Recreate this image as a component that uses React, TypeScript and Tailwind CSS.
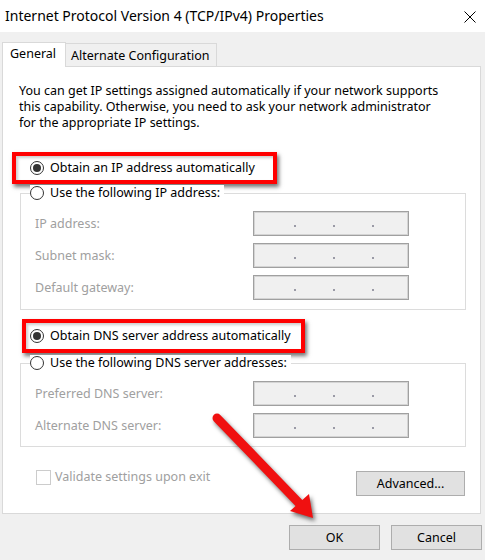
import { ReactNode } from "react";

const font = { fontFamily: '"Noto Sans", "Open Sans", sans-serif' };

function Radio({ checked = false }: { checked?: boolean }) {
  return (
    <span className="w-[14px] h-[14px] rounded-full border border-[#333] bg-white flex items-center justify-center shrink-0">
      {checked && <span className="w-[8px] h-[8px] rounded-full bg-[#333]" />}
    </span>
  );
}

function RedBox({ children, className = "" }: { children: ReactNode; className?: string }) {
  return (
    <div
      className={`border-4 border-[#ff0000] flex items-center gap-[6px] shadow-[2px_3px_4px_rgba(0,0,0,0.55),inset_2px_2px_3px_rgba(0,0,0,0.2)] ${className}`}
    >
      {children}
    </div>
  );
}

function IpBox() {
  return (
    <div className="w-[156px] h-[25px] bg-[#f0f0f0] border border-[#a0a0a0] shadow-[inset_0_0_0_1px_#d4d4d4] flex items-end pb-[8px] pl-[40px] gap-[37px]">
      <span className="w-[2px] h-[2px] bg-[#9a9aa6]" />
      <span className="w-[2px] h-[2px] bg-[#9a9aa6]" />
      <span className="w-[2px] h-[2px] bg-[#9a9aa6]" />
    </div>
  );
}

function Row({ label }: { label: string }) {
  return (
    <div className="flex items-center ml-[5px] h-[25px]">
      <span className="w-[218px] text-[#a0a0a0]">{label}</span>
      <IpBox />
    </div>
  );
}

function Group({
  legend,
  rows,
  className = "",
}: {
  legend: string;
  rows: string[];
  className?: string;
}) {
  return (
    <fieldset
      className={`ml-[17px] w-[446px] border border-[#dcdcdc] pl-[9px] ${className}`}
    >
      <legend className="flex items-center gap-[6px] h-[16px] bg-white pr-[4px]">
        <Radio />
        <span>{legend}</span>
      </legend>
      <div className="flex flex-col gap-[7px] pt-[10px]">
        {rows.map((r) => (
          <Row key={r} label={r} />
        ))}
      </div>
    </fieldset>
  );
}

function Button({ children, className = "" }: { children: ReactNode; className?: string }) {
  return (
    <div
      className={`h-[25px] bg-[#e1e1e1] border border-[#adadad] flex items-center justify-center text-[12.5px] ${className}`}
    >
      {children}
    </div>
  );
}

export default function App() {
  return (
    <div
      className="relative w-[485px] h-[560px] bg-[#f0f0f0] overflow-hidden text-black text-[12.5px] leading-[16px]"
      style={font}
    >
      <div className="h-[32px] bg-white flex items-center justify-between pl-[5px] pr-[9px]">
        <span className="text-[14px]">Internet Protocol Version 4 (TCP/IPv4) Properties</span>
        <svg width="12" height="12" viewBox="0 0 12 12" className="mt-[1px]">
          <path d="M0.5 0.5L11.5 11.5M11.5 0.5L0.5 11.5" stroke="#000" strokeWidth="1" />
        </svg>
      </div>

      <div className="mt-[10px] px-[2px] flex items-end">
        <div className="relative z-10 h-[25px] w-[64px] bg-white border border-b-0 border-[#d9d9d9] pl-[7px] pt-[3px]">
          General
        </div>
        <div className="h-[23px] w-[151px] mb-px bg-[#f0f0f0] border border-l-0 border-b-0 border-[#d9d9d9] pl-[5px] pt-[4px]">
          Alternate Configuration
        </div>
      </div>

      <div className="-mt-px ml-[2px] w-[479px] h-[448px] bg-white border border-[#d9d9d9] flex flex-col">
        <p className="mt-[16px] ml-[16px]">
          You can get IP settings assigned automatically if your network supports
          <br />
          this capability. Otherwise, you need to ask your network administrator
          <br />
          for the appropriate IP settings.
        </p>

        <RedBox className="mt-[21px] ml-[9px] w-[265px] h-[32px] pl-[14px]">
          <Radio checked />
          <span>Obtain an IP address automatically</span>
        </RedBox>

        <Group
          className="mt-[1px] pb-[9px]"
          legend="Use the following IP address:"
          rows={["IP address:", "Subnet mask:", "Default gateway:"]}
        />

        <RedBox className="mt-[9px] ml-[19px] w-[283px] h-[34px] pl-[4px]">
          <Radio checked />
          <span>Obtain DNS server address automatically</span>
        </RedBox>

        <Group
          className="mt-[2px] pb-[8px]"
          legend="Use the following DNS server addresses:"
          rows={["Preferred DNS server:", "Alternate DNS server:"]}
        />

        <div className="mt-[22px] flex items-start justify-between pl-[33px] pr-[15px]">
          <div className="flex items-center gap-[4px] h-[16px]">
            <span className="w-[15px] h-[15px] border border-[#cccccc] bg-white" />
            <span className="text-[#a0a0a0]">Validate settings upon exit</span>
          </div>
          <Button className="mt-[2px] w-[109px]">Advanced...</Button>
        </div>
      </div>

      <div className="mt-[11px] flex justify-end gap-[11px] pr-[3px]">
        <Button className="w-[91px]">OK</Button>
        <Button className="w-[91px]">Cancel</Button>
      </div>

      <svg
        className="absolute left-0 top-0 pointer-events-none drop-shadow-[2px_3px_2px_rgba(0,0,0,0.55)]"
        width="485"
        height="560"
        viewBox="0 0 485 560"
      >
        <line x1="217" y1="418" x2="300" y2="504" stroke="#f01010" strokeWidth="9" strokeLinecap="round" />
        <polygon points="290,511 309,494 313,518" fill="#f01010" />
      </svg>
    </div>
  );
}
